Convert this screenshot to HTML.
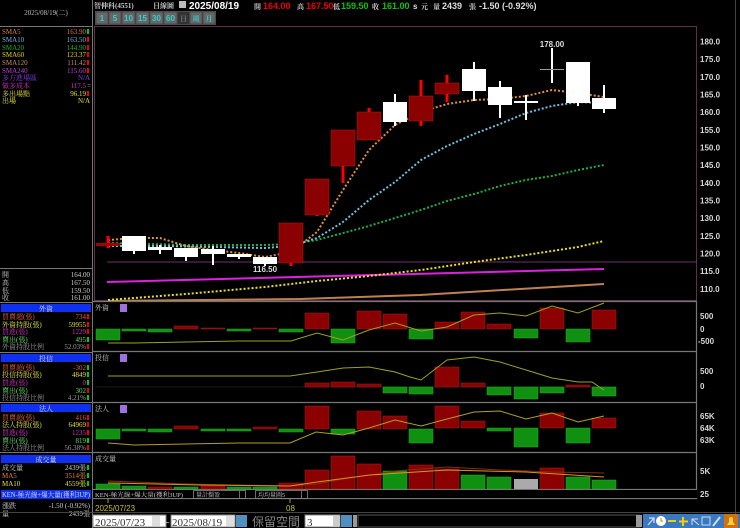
<!DOCTYPE html>
<html><head><meta charset="utf-8"><style>
html,body{margin:0;padding:0;background:#000;width:740px;height:528px;overflow:hidden}
svg{display:block;font-family:"Liberation Sans","Noto Sans CJK TC",sans-serif}
.s{font-family:"Liberation Serif","Noto Serif CJK SC",serif;font-size:7px}
.ax{fill:#d8d8d8;font-size:8px;font-weight:bold}
</style></head><body>
<svg width="740" height="528" viewBox="0 0 740 528" xmlns="http://www.w3.org/2000/svg">
<rect width="740" height="528" fill="#000"/>
<line x1="92.5" y1="0" x2="92.5" y2="528" stroke="#777" stroke-width="1"/>
<line x1="0" y1="26.5" x2="92" y2="26.5" stroke="#777"/>
<text x="46" y="15" text-anchor="middle" class="s" fill="#bbb">2025/08/19(二)</text>
<g class="s">
<text x="2" y="34" fill="#d08040">SMA5</text><text x="86" y="34" text-anchor="end" fill="#d08040">163.90</text><rect x="87" y="29" width="2" height="5" fill="#0c0"/>
<text x="2" y="42" fill="#6ab0e0">SMA10</text><text x="86" y="42" text-anchor="end" fill="#6ab0e0">163.50</text><rect x="87" y="37" width="2" height="5" fill="#e00"/>
<text x="2" y="50" fill="#20b020">SMA20</text><text x="86" y="50" text-anchor="end" fill="#20b020">144.90</text><rect x="87" y="45" width="2" height="5" fill="#e00"/>
<text x="2" y="57" fill="#e0d020">SMA60</text><text x="86" y="57" text-anchor="end" fill="#e0d020">123.37</text><rect x="87" y="52" width="2" height="5" fill="#e00"/>
<text x="2" y="65" fill="#c09060">SMA120</text><text x="86" y="65" text-anchor="end" fill="#c09060">111.42</text><rect x="87" y="60" width="2" height="5" fill="#e00"/>
<text x="2" y="73" fill="#c040d0">SMA240</text><text x="86" y="73" text-anchor="end" fill="#c040d0">115.60</text><rect x="87" y="68" width="2" height="5" fill="#e00"/>
<text x="2" y="80" fill="#8040e0">多方進場區</text><text x="90" y="80" text-anchor="end" fill="#8040e0">N/A</text>
<text x="2" y="88" fill="#d030c0">做多成本</text><text x="86" y="88" text-anchor="end" fill="#d030c0">117.5</text><text x="87" y="88" fill="#aaa">=</text>
<text x="2" y="96" fill="#e0e040">多出場點</text><text x="86" y="96" text-anchor="end" fill="#e0e040">96.19</text><rect x="87" y="91" width="2" height="5" fill="#e00"/>
<text x="2" y="103" fill="#e0e040">出場</text><text x="90" y="103" text-anchor="end" fill="#e0e040">N/A</text>
</g>
<line x1="0" y1="268.5" x2="92" y2="268.5" stroke="#777"/>
<g class="s" fill="#ccc">
<text x="2" y="277">開</text><text x="90" y="277" text-anchor="end">164.00</text>
<text x="2" y="285">高</text><text x="90" y="285" text-anchor="end">167.50</text>
<text x="2" y="293">低</text><text x="90" y="293" text-anchor="end">159.50</text>
<text x="2" y="300">收</text><text x="90" y="300" text-anchor="end">161.00</text>
</g>
<line x1="0" y1="302.5" x2="92" y2="302.5" stroke="#777"/>
<rect x="1" y="304" width="90" height="8" fill="#1030f0"/>
<text x="46" y="311" text-anchor="middle" class="s" fill="#ddd">外資</text>
<g class="s">
<text x="2" y="319" fill="#e06040">買賣超(張)</text><text x="86" y="319" text-anchor="end" fill="#e06040">734</text><rect x="87" y="314" width="2" height="5" fill="#e00"/>
<text x="2" y="327" fill="#e0e040">外資持股(張)</text><text x="86" y="327" text-anchor="end" fill="#e0e040">59955</text><rect x="87" y="322" width="2" height="5" fill="#e00"/>
<text x="2" y="334" fill="#d030c0">買進(張)</text><text x="86" y="334" text-anchor="end" fill="#d030c0">1229</text><rect x="87" y="329" width="2" height="5" fill="#e00"/>
<text x="2" y="342" fill="#60e060">賣出(張)</text><text x="86" y="342" text-anchor="end" fill="#60e060">495</text><rect x="87" y="337" width="2" height="5" fill="#0c0"/>
<text x="2" y="349" fill="#999">外資持股比例</text><text x="86" y="349" text-anchor="end" fill="#999">52.03%</text><rect x="87" y="344" width="2" height="5" fill="#e00"/>
</g>
<line x1="0" y1="352.5" x2="92" y2="352.5" stroke="#777"/>
<rect x="1" y="354" width="90" height="8" fill="#1030f0"/>
<text x="46" y="361" text-anchor="middle" class="s" fill="#ddd">投信</text>
<g class="s">
<text x="2" y="370" fill="#e06040">買賣超(張)</text><text x="86" y="370" text-anchor="end" fill="#e06040">-302</text><rect x="87" y="365" width="2" height="5" fill="#0c0"/>
<text x="2" y="377" fill="#e0e040">投信持股(張)</text><text x="86" y="377" text-anchor="end" fill="#e0e040">4849</text><rect x="87" y="372" width="2" height="5" fill="#0c0"/>
<text x="2" y="385" fill="#d030c0">買進(張)</text><text x="86" y="385" text-anchor="end" fill="#d030c0">0</text><rect x="87" y="380" width="2" height="5" fill="#0c0"/>
<text x="2" y="393" fill="#60e060">賣出(張)</text><text x="86" y="393" text-anchor="end" fill="#60e060">302</text><rect x="87" y="388" width="2" height="5" fill="#e00"/>
<text x="2" y="400" fill="#999">投信持股比例</text><text x="86" y="400" text-anchor="end" fill="#999">4.21%</text><rect x="87" y="395" width="2" height="5" fill="#0c0"/>
</g>
<line x1="0" y1="402.5" x2="92" y2="402.5" stroke="#777"/>
<rect x="1" y="404" width="90" height="8" fill="#1030f0"/>
<text x="46" y="411" text-anchor="middle" class="s" fill="#ddd">法人</text>
<g class="s">
<text x="2" y="420" fill="#e06040">買賣超(張)</text><text x="86" y="420" text-anchor="end" fill="#e06040">416</text><rect x="87" y="415" width="2" height="5" fill="#e00"/>
<text x="2" y="427" fill="#e0e040">法人持股(張)</text><text x="86" y="427" text-anchor="end" fill="#e0e040">64969</text><rect x="87" y="422" width="2" height="5" fill="#e00"/>
<text x="2" y="435" fill="#d030c0">買進(張)</text><text x="86" y="435" text-anchor="end" fill="#d030c0">1235</text><rect x="87" y="430" width="2" height="5" fill="#e00"/>
<text x="2" y="443" fill="#60e060">賣出(張)</text><text x="86" y="443" text-anchor="end" fill="#60e060">819</text><rect x="87" y="438" width="2" height="5" fill="#0c0"/>
<text x="2" y="450" fill="#999">法人持股比例</text><text x="86" y="450" text-anchor="end" fill="#999">56.38%</text><rect x="87" y="445" width="2" height="5" fill="#e00"/>
</g>
<line x1="0" y1="452.5" x2="92" y2="452.5" stroke="#777"/>
<rect x="1" y="455" width="90" height="8" fill="#1030f0"/>
<text x="46" y="462" text-anchor="middle" class="s" fill="#ddd">成交量</text>
<g class="s">
<text x="2" y="470" fill="#ccc">成交量</text><text x="86" y="470" text-anchor="end" fill="#ccc">2439張</text><rect x="87" y="465" width="2" height="5" fill="#0c0"/>
<text x="2" y="478" fill="#e08040">MA5</text><text x="86" y="478" text-anchor="end" fill="#e08040">3514張</text><rect x="87" y="473" width="2" height="5" fill="#0c0"/>
<text x="2" y="486" fill="#e0e040">MA10</text><text x="86" y="486" text-anchor="end" fill="#e0e040">4559張</text><rect x="87" y="481" width="2" height="5" fill="#0c0"/>
</g>
<rect x="1" y="490" width="90" height="9" fill="#1030f0"/>
<text x="2" y="497" class="s" fill="#ddd" font-size="6px" textLength="88" lengthAdjust="spacingAndGlyphs">KEN-極光線+爆大量(獲利3UP)</text>
<g class="s" fill="#ccc">
<text x="2" y="508">漲跌</text><text x="90" y="508" text-anchor="end">-1.50 (-0.92%)</text>
<text x="2" y="516">量</text><text x="90" y="516" text-anchor="end">2439張</text>
</g>

<g font-size="8px" font-weight="bold">
<text x="94" y="8" class="s" fill="#ccc">智伸科(4551)</text>
<text x="153" y="8" class="s" fill="#ccc">日線圖</text>
<rect x="179" y="1" width="7" height="7" fill="#bbb"/>
<text x="189" y="9" fill="#fff" font-size="10px">2025/08/19</text>
<text x="254" y="9" class="s" fill="#ccc">開</text><text x="263" y="9" fill="#e00" font-size="9px">164.00</text>
<text x="297" y="9" class="s" fill="#ccc">高</text><text x="306" y="9" fill="#e00" font-size="9px">167.50</text>
<text x="333" y="9" class="s" fill="#ccc">低</text><text x="341" y="9" fill="#10c010" font-size="9px">159.50</text>
<text x="372" y="9" class="s" fill="#ccc">收</text><text x="382" y="9" fill="#10c010" font-size="9px">161.00</text>
<text x="413" y="9" fill="#ddd" font-size="8px">s</text><text x="421" y="9" class="s" fill="#ccc">元</text>
<text x="433" y="9" class="s" fill="#ccc">量</text><text x="442" y="9" fill="#ddd" font-size="9px">2439</text><text x="469" y="9" class="s" fill="#ccc">張</text>
<text x="479" y="9" fill="#ddd" font-size="9px">-1.50 (-0.92%)</text>
</g>
<g font-size="8px" font-weight="bold" text-anchor="middle">
<rect x="95" y="11" width="121" height="14" fill="#555"/>
<g fill="#666" stroke="#333" stroke-width="0.5">
<rect x="96" y="12" width="12" height="12"/><rect x="109" y="12" width="12" height="12"/><rect x="122" y="12" width="13" height="12"/><rect x="136" y="12" width="13" height="12"/><rect x="150" y="12" width="13" height="12"/><rect x="164" y="12" width="13" height="12"/><rect x="178" y="12" width="11" height="12" fill="#333"/><rect x="190" y="12" width="12" height="12"/><rect x="203" y="12" width="12" height="12"/>
</g>
<g fill="#30d0d0"><text x="102" y="21">1</text><text x="115" y="21">5</text><text x="128.5" y="21">10</text><text x="142.5" y="21">15</text><text x="156.5" y="21">30</text><text x="170.5" y="21">60</text><text x="183.5" y="21" class="s" fill="#777">日</text><text x="196" y="21" class="s">周</text><text x="209" y="21" class="s">月</text></g>
</g>

<rect x="94.5" y="26.5" width="602" height="274" fill="none" stroke="#603048"/>
<line x1="735.5" y1="0" x2="735.5" y2="528" stroke="#444"/>
<g class="ax">
<text x="700" y="44.5">180.0</text><text x="700" y="62">175.0</text><text x="700" y="80">170.0</text><text x="700" y="97.5">165.0</text><text x="700" y="115">160.0</text><text x="700" y="133">155.0</text><text x="700" y="150.5">150.0</text><text x="700" y="168">145.0</text><text x="700" y="186">140.0</text><text x="700" y="203.5">135.0</text><text x="700" y="221">130.0</text><text x="700" y="239">125.0</text><text x="700" y="256.5">120.0</text><text x="700" y="274">115.0</text><text x="700" y="292">110.0</text>
</g>
<line x1="107" y1="262" x2="697" y2="262" stroke="#703070" stroke-width="1"/>
<line x1="107" y1="282" x2="604" y2="269" stroke="#e020e0" stroke-width="2"/>
<polyline points="108,301 300,299 420,295 520,289 604,284" fill="none" stroke="#c08050" stroke-width="2"/>
<polyline points="108,300 186,294 265,287 317,281 369,276 421,270 474,262 526,255 578,247 604,241" fill="none" stroke="#e8e020" stroke-width="2" stroke-dasharray="2,2"/>
<polyline points="108,243 186,245 265,245 291,244 317,240 343,233 369,226 395,218 421,210 447,201 474,194 500,186 526,180 552,176 578,170 604,165" fill="none" stroke="#20b040" stroke-width="2" stroke-dasharray="2,2"/>
<polyline points="108,246 160,246 213,247 265,248 291,246 317,238 343,222 369,200 395,182 421,160 447,146 474,134 500,124 526,113 552,106 578,102 604,103" fill="none" stroke="#70c0e0" stroke-width="2" stroke-dasharray="2,2"/>
<polyline points="108,240 134,238 160,238 186,246 213,250 239,253 265,257 291,252 317,232 343,190 369,150 395,125 421,112 447,104 474,100 500,99 526,96 552,90 578,93 604,97" fill="none" stroke="#e09040" stroke-width="2" stroke-dasharray="2,2"/>
<g>
<line x1="108" y1="236" x2="108" y2="248" stroke="#f00" stroke-width="3"/><rect x="96" y="243" width="24" height="3" fill="#a00000"/>
<line x1="134" y1="236" x2="134" y2="254" stroke="#fff" stroke-width="2"/><rect x="122" y="236" width="24" height="15" fill="#fff"/>
<line x1="160" y1="245" x2="160" y2="254" stroke="#fff" stroke-width="2"/><rect x="148" y="247" width="24" height="3" fill="#fff"/>
<line x1="186" y1="248" x2="186" y2="261" stroke="#fff" stroke-width="2"/><rect x="174" y="248" width="24" height="9" fill="#fff"/>
<line x1="213" y1="246" x2="213" y2="265" stroke="#fff" stroke-width="2"/><rect x="201" y="249" width="24" height="5" fill="#fff"/>
<line x1="239" y1="254" x2="239" y2="259" stroke="#fff" stroke-width="2"/><rect x="227" y="254" width="24" height="3" fill="#fff"/>
<line x1="265" y1="257" x2="265" y2="266" stroke="#fff" stroke-width="2"/><rect x="253" y="257" width="24" height="7" fill="#fff"/>
<line x1="291" y1="223" x2="291" y2="266" stroke="#f00" stroke-width="3"/><rect x="279" y="223" width="24" height="40" fill="#8b0000" stroke="#b02020" stroke-width="0.5"/>
<line x1="317" y1="179" x2="317" y2="216" stroke="#f00" stroke-width="3"/><rect x="305" y="179" width="24" height="36" fill="#8b0000" stroke="#b02020" stroke-width="0.5"/>
<line x1="343" y1="130" x2="343" y2="183" stroke="#f00" stroke-width="3"/><rect x="331" y="130" width="24" height="36" fill="#8b0000" stroke="#b02020" stroke-width="0.5"/>
<line x1="369" y1="108" x2="369" y2="140" stroke="#f00" stroke-width="3"/><rect x="357" y="112" width="24" height="28" fill="#8b0000" stroke="#b02020" stroke-width="0.5"/>
<line x1="395" y1="94" x2="395" y2="126" stroke="#fff" stroke-width="2"/><rect x="383" y="102" width="24" height="20" fill="#fff"/>
<line x1="421" y1="80" x2="421" y2="126" stroke="#f00" stroke-width="3"/><rect x="409" y="96" width="24" height="25" fill="#8b0000" stroke="#b02020" stroke-width="0.5"/>
<line x1="447" y1="75" x2="447" y2="102" stroke="#f00" stroke-width="3"/><rect x="435" y="83" width="24" height="11" fill="#8b0000" stroke="#b02020" stroke-width="0.5"/>
<line x1="474" y1="62" x2="474" y2="101" stroke="#fff" stroke-width="2"/><rect x="462" y="69" width="24" height="22" fill="#fff"/>
<line x1="500" y1="81" x2="500" y2="118" stroke="#fff" stroke-width="2"/><rect x="488" y="87" width="24" height="18" fill="#fff"/>
<line x1="526" y1="95" x2="526" y2="120" stroke="#fff" stroke-width="2"/><rect x="514" y="101" width="24" height="2" fill="#fff"/>
<line x1="552" y1="48" x2="552" y2="83" stroke="#fff" stroke-width="2"/><line x1="540" y1="69.5" x2="564" y2="69.5" stroke="#999" stroke-width="1"/>
<line x1="578" y1="62" x2="578" y2="106" stroke="#fff" stroke-width="2"/><rect x="566" y="62" width="24" height="41" fill="#fff"/>
<line x1="604" y1="85" x2="604" y2="113" stroke="#fff" stroke-width="2"/><rect x="592" y="98" width="24" height="11" fill="#fff"/>
</g>
<text x="552" y="47" text-anchor="middle" fill="#ddd" font-size="8px" font-weight="bold">178.00</text>
<text x="265" y="272" text-anchor="middle" fill="#ddd" font-size="8px" font-weight="bold">116.50</text>

<g stroke="#777" stroke-width="1.2" fill="none">
<line x1="93" y1="301.5" x2="697" y2="301.5"/>
<line x1="93" y1="351.5" x2="697" y2="351.5"/>
<line x1="93" y1="402.5" x2="697" y2="402.5"/>
<line x1="93" y1="452.5" x2="697" y2="452.5"/>
<line x1="93" y1="489.5" x2="697" y2="489.5"/>
<line x1="93" y1="498.5" x2="697" y2="498.5"/>
<line x1="696.5" y1="301" x2="696.5" y2="499"/>
</g>
<g class="s" fill="#ccc">
<text x="95" y="310">外資</text><text x="95" y="360">投信</text><text x="95" y="411">法人</text><text x="95" y="461">成交量</text>
</g>
<g fill="#a070e0"><rect x="120" y="304" width="7" height="8"/><rect x="120" y="354" width="7" height="8"/><rect x="120" y="405" width="7" height="8"/></g>
<g class="ax">
<text x="700" y="319">500</text><text x="700" y="332">0</text><text x="698" y="344">-500</text>
<text x="700" y="374">500</text><text x="700" y="389">0</text>
<text x="700" y="419">65K</text><text x="700" y="431">64K</text><text x="700" y="443">63K</text>
<text x="700" y="474">5K</text><text x="700" y="497">25</text>
</g>
<g>
<g fill="#109010" stroke="#20b020" stroke-width="0.5">
<rect x="96" y="329" width="24" height="11"/><rect x="122" y="329" width="24" height="2"/><rect x="148" y="329" width="24" height="3"/><rect x="227" y="329" width="24" height="2"/><rect x="279" y="329" width="24" height="3"/><rect x="331" y="329" width="24" height="14"/><rect x="409" y="329" width="24" height="10"/><rect x="514" y="329" width="24" height="9"/><rect x="566" y="329" width="24" height="13"/>
</g>
<g fill="#8b0000" stroke="#a02020" stroke-width="0.5">
<rect x="174" y="326" width="24" height="3"/><rect x="201" y="328" width="24" height="1"/><rect x="253" y="328" width="24" height="1"/><rect x="305" y="313" width="24" height="16"/><rect x="357" y="311" width="24" height="18"/><rect x="383" y="314" width="24" height="15"/><rect x="435" y="322" width="24" height="7"/><rect x="461" y="312" width="24" height="17"/><rect x="487" y="324" width="24" height="5"/><rect x="540" y="308" width="24" height="21"/><rect x="592" y="310" width="24" height="19"/>
</g>
<polyline points="108,343 134,343 186,342 239,341 291,341 317,333 343,340 369,330 395,323 421,331 447,327 474,315 500,313 526,316 552,306 578,313 604,303" fill="none" stroke="#a0a020" stroke-width="1"/>
</g>
<g>
<line x1="96" y1="387" x2="616" y2="387" stroke="#333" stroke-width="0.6"/>
<g fill="#8b0000" stroke="#a02020" stroke-width="0.5">
<rect x="305" y="383" width="24" height="4"/><rect x="331" y="382" width="24" height="5"/><rect x="357" y="384" width="24" height="3"/><rect x="435" y="367" width="24" height="20"/><rect x="461" y="383" width="24" height="4"/><rect x="566" y="385" width="24" height="2"/>
</g>
<g fill="#109010" stroke="#20b020" stroke-width="0.5">
<rect x="383" y="387" width="24" height="6"/><rect x="409" y="387" width="24" height="7"/><rect x="487" y="387" width="24" height="8"/><rect x="514" y="387" width="24" height="12"/><rect x="540" y="387" width="24" height="6"/><rect x="592" y="387" width="24" height="9"/>
</g>
<polyline points="108,376 290,376 317,372 343,368 369,367 395,372 410,377 421,380 447,360 474,357 500,362 526,370 552,378 578,382 592,382 604,390" fill="none" stroke="#a0a020" stroke-width="1"/>
</g>
<g>
<g fill="#109010" stroke="#20b020" stroke-width="0.5">
<rect x="96" y="429" width="24" height="10"/><rect x="122" y="429" width="24" height="2"/><rect x="148" y="429" width="24" height="3"/><rect x="201" y="429" width="24" height="2"/><rect x="227" y="429" width="24" height="2"/><rect x="279" y="429" width="24" height="3"/><rect x="331" y="429" width="24" height="5"/><rect x="409" y="429" width="24" height="14"/><rect x="487" y="428" width="24" height="3"/><rect x="514" y="428" width="24" height="19"/><rect x="566" y="428" width="24" height="15"/>
</g>
<g fill="#8b0000" stroke="#a02020" stroke-width="0.5">
<rect x="174" y="426" width="24" height="3"/><rect x="253" y="427" width="24" height="2"/><rect x="305" y="406" width="24" height="23"/><rect x="357" y="411" width="24" height="18"/><rect x="383" y="416" width="24" height="13"/><rect x="435" y="406" width="24" height="22"/><rect x="461" y="421" width="24" height="7"/><rect x="540" y="413" width="24" height="15"/><rect x="592" y="418" width="24" height="10"/>
</g>
<polyline points="108,443 134,445 186,444 239,443 290,443 316,432 343,435 369,428 395,420 421,426 447,419 474,412 500,411 526,419 552,413 578,422 604,416" fill="none" stroke="#b0a020" stroke-width="1"/>
</g>
<g>
<g fill="#109010" stroke="#20b020" stroke-width="0.5">
<rect x="96" y="484" width="24" height="5"/><rect x="122" y="486" width="24" height="3"/><rect x="174" y="487" width="24" height="2"/><rect x="227" y="487" width="24" height="2"/><rect x="253" y="487" width="24" height="2"/><rect x="383" y="471" width="24" height="18"/><rect x="461" y="475" width="24" height="14"/><rect x="487" y="477" width="24" height="12"/><rect x="566" y="477" width="24" height="12"/><rect x="592" y="480" width="24" height="9"/>
</g>
<g fill="#8b0000" stroke="#b02020" stroke-width="0.5">
<rect x="148" y="487" width="24" height="2"/><rect x="201" y="486" width="24" height="3"/><rect x="279" y="483" width="24" height="6"/><rect x="305" y="470" width="24" height="19"/><rect x="331" y="456" width="24" height="33"/><rect x="357" y="464" width="24" height="25"/><rect x="409" y="465" width="24" height="24"/><rect x="435" y="469" width="24" height="20"/><rect x="540" y="468" width="24" height="21"/>
</g>
<rect x="514" y="479" width="24" height="10" fill="#aaa"/>
<polyline points="108,481 186,484 290,486 317,484 343,479 395,471 447,467 500,470 552,472 604,473" fill="none" stroke="#803010" stroke-width="1"/>
<polyline points="108,483 200,485 290,486 317,482 370,475 447,470 526,472 604,477" fill="none" stroke="#e09020" stroke-width="1"/>
</g>
<rect x="93" y="490" width="604" height="8" fill="#000"/>
<g class="s" fill="#ccc"><text x="95" y="497" font-size="6px" textLength="88" lengthAdjust="spacingAndGlyphs">KEN-極光線+爆大量(獲利3UP)</text><text x="196" y="497" font-size="6px">量計擷盈</text><text x="258" y="497" font-size="6px">均均量圖5</text></g>
<g stroke="#888" fill="none" stroke-width="0.8"><rect x="193.5" y="490.5" width="52" height="8"/><rect x="255.5" y="490.5" width="52" height="8"/><line x1="239.5" y1="491" x2="239.5" y2="498"/><line x1="301.5" y1="491" x2="301.5" y2="498"/></g>
<line x1="108" y1="499" x2="108" y2="503" stroke="#aa0"/>
<line x1="290" y1="499" x2="290" y2="503" stroke="#aa0"/>
<text x="95" y="511" fill="#c8c020" font-size="8px">2025/07/23</text>
<text x="286" y="511" fill="#c8c020" font-size="8px">08</text>
<line x1="0" y1="512.5" x2="740" y2="512.5" stroke="#444"/>
<rect x="93" y="515" width="73" height="12" fill="#fff" stroke="#888"/>
<text x="95" y="526" fill="#333" font-size="11px" font-family="Liberation Serif">2025/07/23</text>
<rect x="152" y="516" width="8" height="10" fill="#ddd"/>
<text x="164" y="526" fill="#ccc" font-size="10px">~</text>
<rect x="171" y="515" width="64" height="12" fill="#fff" stroke="#888"/>
<text x="172" y="526" fill="#333" font-size="11px" font-family="Liberation Serif">2025/08/19</text>
<rect x="226" y="516" width="8" height="10" fill="#ddd"/>
<rect x="236" y="515" width="11" height="12" fill="#5090c0"/>
<text x="252" y="526" fill="#888" font-size="12px" font-family="'Noto Sans CJK TC',sans-serif">保留空間</text>
<rect x="305" y="515" width="35" height="12" fill="#fff" stroke="#888"/>
<text x="307" y="526" fill="#333" font-size="11px" font-family="Liberation Serif">3</text>
<rect x="333" y="516" width="7" height="10" fill="#ccc"/>
<rect x="341" y="515" width="11" height="12" fill="#5090c0"/>
<rect x="353" y="515" width="4" height="12" fill="#999"/>
<rect x="358" y="515" width="282" height="12" fill="#000" stroke="#555"/>
<rect x="636" y="515" width="6" height="12" fill="#999"/>
<g>
<rect x="643" y="514" width="97" height="14" fill="#3a78c0"/>
<path d="M648 525 L654 518 M649 518 H654 V523" stroke="#cde" stroke-width="1.3" fill="none"/>
<circle cx="661" cy="521" r="5" fill="#fff"/><path d="M661 518 V521 H663" stroke="#d08000" fill="none"/>
<rect x="668" y="520" width="8" height="2" fill="#f0d000"/>
<path d="M683 517 V526 M679 521.5 H688" stroke="#f0d000" stroke-width="2"/>
<path d="M692 525 L692 519 L698 519 M692 519 L699 525" stroke="#cde" fill="none"/>
<rect x="702" y="517" width="8" height="8" fill="none" stroke="#cde"/>
<path d="M713 526 L720 517" stroke="#cde" stroke-width="2"/>
<rect x="724" y="514" width="14" height="14" fill="#d07010"/>
<path d="M727 525 H735 L733 522 V519 A2 2 0 0 0 729 519 V522 Z" fill="#ffd040"/>
</g>
</svg>
</body></html>
